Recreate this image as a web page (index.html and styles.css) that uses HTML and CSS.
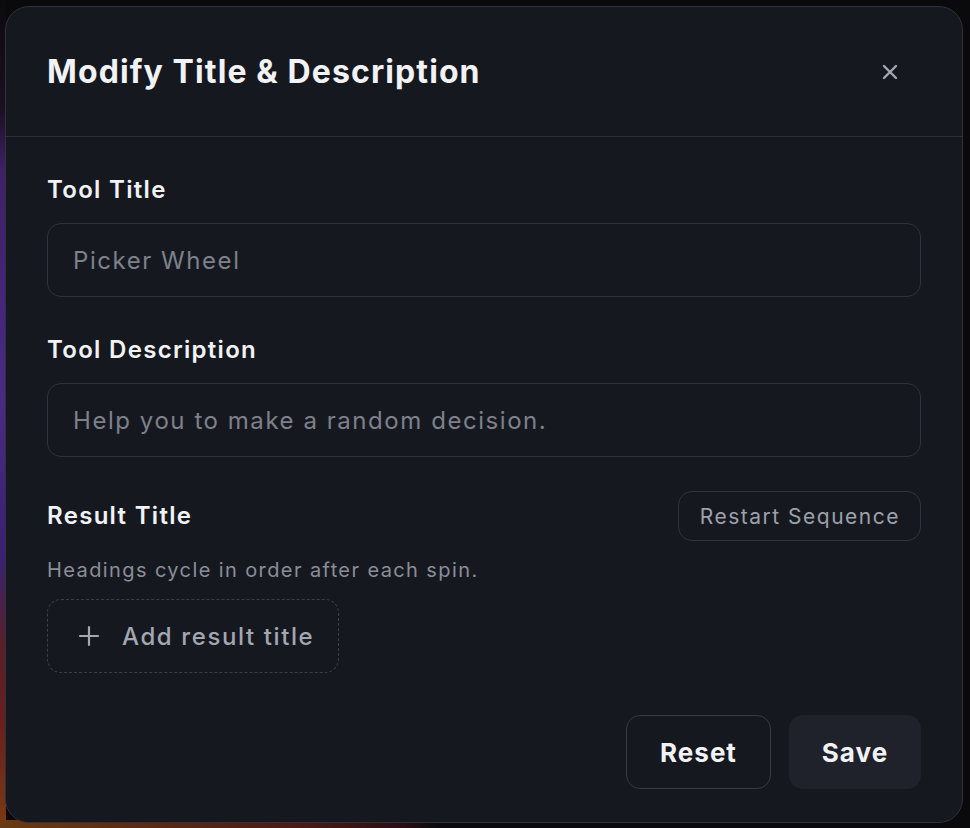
FILE: index.html
```html
<!DOCTYPE html>
<html lang="en">
<head>
<meta charset="utf-8">
<title>Modify Title &amp; Description</title>
<link rel="stylesheet" href="styles.css">
</head>
<body>
<div class="backdrop">
  <div class="modal">
    <div class="modal-header">
      <h2 class="modal-title">Modify Title &amp; Description</h2>
      <button class="close-btn" aria-label="Close">
        <svg width="18" height="18" viewBox="0 0 18 18" fill="none" stroke="currentColor" stroke-width="2.4" stroke-linecap="round"><path d="M3 3 L15 15 M15 3 L3 15"/></svg>
      </button>
    </div>
    <div class="modal-body">
      <div class="field">
        <label class="label">Tool Title</label>
        <input class="input" type="text" placeholder="Picker Wheel">
      </div>
      <div class="field">
        <label class="label">Tool Description</label>
        <input class="input" type="text" placeholder="Help you to make a random decision.">
      </div>
      <div class="result">
        <div class="result-head">
          <span class="label">Result Title</span>
          <button class="ghost-btn">Restart Sequence</button>
        </div>
        <p class="hint">Headings cycle in order after each spin.</p>
        <button class="add-btn">
          <svg width="22" height="22" viewBox="0 0 22 22" fill="none" stroke="currentColor" stroke-width="2.2" stroke-linecap="round"><path d="M11 2 V20 M2 11 H20"/></svg>
          <span>Add result title</span>
        </button>
      </div>
      <div class="footer">
        <button class="btn btn-outline">Reset</button>
        <button class="btn btn-solid">Save</button>
      </div>
    </div>
  </div>
</div>
</body>
</html>
```
FILE: styles.css
```css
* { box-sizing: border-box; }
html, body { margin: 0; padding: 0; }
body {
  width: 970px;
  height: 828px;
  overflow: hidden;
  font-family: Inter, "Noto Sans", sans-serif;
  background:
    linear-gradient(to right, #6a3a12 0px, #4a1a18 300px, #2a0f14 400px, rgba(10,10,13,0) 440px) bottom left / 100% 8px no-repeat,
    linear-gradient(to bottom, #0b0b0e 0px, #1a1020 110px, #3f2068 170px, #4a2a86 400px, #3a2070 560px, #5a1e2a 640px, #6a1e1e 720px, #7a3a12 828px) left top / 6px 100% no-repeat,
    #0a0a0d;
}
.backdrop {
  padding: 6px 7px 5px 5px;
}
.modal {
  width: 958px;
  height: 817px;
  background: #161820;
  border: 1px solid #2e323c;
  border-radius: 24px;
  display: flex;
  flex-direction: column;
}
.modal-header {
  height: 130px;
  border-bottom: 1px solid #2b2f39;
  display: flex;
  align-items: center;
  justify-content: space-between;
  padding: 0 52px 0 41px;
}
.modal-title {
  margin: 0;
  font-size: 32px;
  font-weight: 700;
  color: #f1f2f5;
  letter-spacing: 1.1px;
  line-height: 40px;
}
.close-btn {
  width: 40px;
  height: 40px;
  border: none;
  background: transparent;
  color: #a3a7b1;
  display: flex;
  align-items: center;
  justify-content: center;
  padding: 0;
}
.modal-body {
  padding: 38px 41px 0 41px;
  display: flex;
  flex-direction: column;
}
.field {
  display: flex;
  flex-direction: column;
  gap: 18px;
  margin-bottom: 38px;
}
.label {
  font-size: 24px;
  font-weight: 600;
  color: #f1f2f5;
  line-height: 30px;
  letter-spacing: 1.3px;
}
.input {
  height: 74px;
  border: 1px solid #2f333d;
  border-radius: 14px;
  background: #161820;
  padding: 0 25px;
  font-family: inherit;
  font-size: 24px;
  letter-spacing: 1.55px;
  color: #e6e7ea;
  outline: none;
}
.input::placeholder { color: #7d818b; }
.result {
  margin-top: -4px;
  display: flex;
  flex-direction: column;
  align-items: flex-start;
}
.result-head {
  width: 100%;
  display: flex;
  justify-content: space-between;
  align-items: center;
  height: 50px;
}
.ghost-btn {
  height: 50px;
  padding: 0 20px 0 21px;
  border: 1px solid #30343e;
  border-radius: 14px;
  background: transparent;
  font-family: inherit;
  font-size: 21px;
  letter-spacing: 1.5px;
  color: #9da1ab;
}
.hint {
  margin: 15px 0 15px 0;
  font-size: 20px;
  line-height: 28px;
  letter-spacing: 1.4px;
  color: #8a8e98;
}
.add-btn {
  height: 74px;
  width: 292px;
  border: 1.5px dashed #3b3f49;
  border-radius: 14px;
  background: transparent;
  display: flex;
  align-items: center;
  gap: 22px;
  padding: 0 0 0 30px;
  color: #a3a7b1;
  font-family: inherit;
  font-size: 24px;
  font-weight: 500;
  letter-spacing: 1.6px;
}
.footer {
  margin-top: 42px;
  display: flex;
  justify-content: flex-end;
  gap: 18px;
}
.btn {
  height: 74px;
  border-radius: 14px;
  font-family: inherit;
  font-size: 26px;
  font-weight: 700;
  letter-spacing: 1px;
  color: #f1f2f5;
}
.btn-outline {
  width: 145px;
  border: 1px solid #353944;
  background: transparent;
}
.btn-solid {
  width: 132px;
  border: none;
  background: #1f222b;
}
```
